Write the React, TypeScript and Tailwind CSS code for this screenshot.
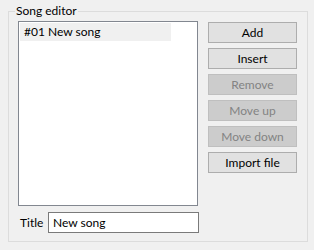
import React from "react";

const buttons = [
  { label: "Add", enabled: true },
  { label: "Insert", enabled: true },
  { label: "Remove", enabled: false },
  { label: "Move up", enabled: false },
  { label: "Move down", enabled: false },
  { label: "Import file", enabled: true },
];

export default function App() {
  return (
    <div
      className="w-[314px] h-[250px] bg-[#f0f0f0] pt-[11px] pl-[8px] text-[12px] text-black overflow-hidden"
      style={{ fontFamily: 'Lato, "Noto Sans", sans-serif' }}
    >
      {/* group box */}
      <div className="relative w-[300px] h-[231px] border border-[#dcdcdc] pt-[9px] pl-[9px]">
        <span className="absolute left-[6px] top-[-9px] bg-[#f0f0f0] px-[1px] leading-[16px]">
          Song editor
        </span>

        <div className="flex gap-[10px]">
          <div className="w-[180px] h-[185px] bg-white border border-[#828790] p-px">
            <div className="w-[151px] h-[18px] bg-[#f0f0f0] pl-[4px] leading-[18px]">
              #01 New song
            </div>
          </div>

          <div className="flex flex-col gap-[5px] pt-px">
            {buttons.map((b) => (
              <button
                key={b.label}
                disabled={!b.enabled}
                className={
                  b.enabled
                    ? "w-[89px] h-[21px] bg-[#e1e1e1] border border-[#adadad] leading-[19px] text-black"
                    : "w-[89px] h-[21px] bg-[#cccccc] border border-[#bfbfbf] leading-[19px] text-[#838383]"
                }
              >
                {b.label}
              </button>
            ))}
          </div>
        </div>

        <div className="flex items-center mt-[6px]">
          <span className="w-[30px] pl-[2px]">Title</span>
          <input
            readOnly
            value="New song"
            className="w-[151px] h-[21px] border border-[#7a7a7a] bg-white px-[4px] outline-none"
          />
        </div>
      </div>
    </div>
  );
}
